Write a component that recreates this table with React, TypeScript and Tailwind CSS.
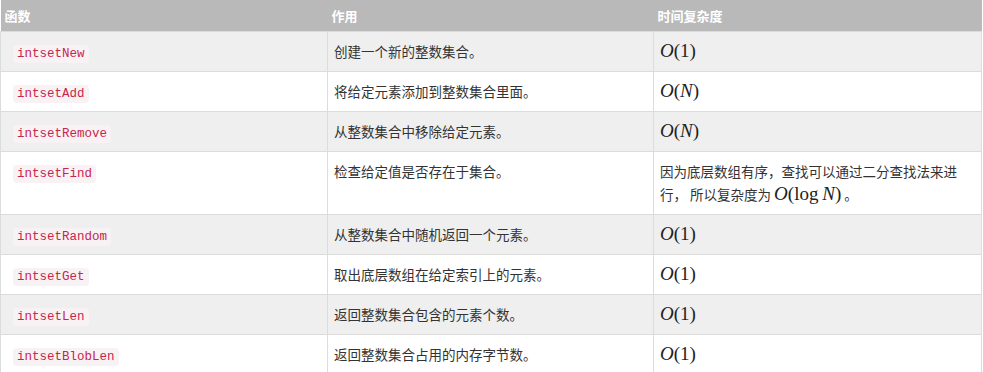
import React from 'react';

type Row = { fn: string; desc: string; cost: React.ReactNode };

// inline formula, KaTeX-ish look with a serif face
const O = ({ children }: { children: React.ReactNode }) => (
  <span className="font-['Liberation_Serif',serif] text-[19px] leading-[0] whitespace-nowrap text-[#222]">
    <i>O</i>
    <span>(</span>
    {children}
    <span>)</span>
  </span>
);

const rows: Row[] = [
  { fn: 'intsetNew', desc: '创建一个新的整数集合。', cost: <O>1</O> },
  { fn: 'intsetAdd', desc: '将给定元素添加到整数集合里面。', cost: <O><i>N</i></O> },
  { fn: 'intsetRemove', desc: '从整数集合中移除给定元素。', cost: <O><i>N</i></O> },
  {
    fn: 'intsetFind',
    desc: '检查给定值是否存在于集合。',
    cost: (
      <>
        因为底层数组有序，查找可以通过二分查找法来进
        <br />
        行， 所以复杂度为{' '}
        <O>
          log&thinsp;<i>N</i>
        </O>{' '}
        。
      </>
    ),
  },
  { fn: 'intsetRandom', desc: '从整数集合中随机返回一个元素。', cost: <O>1</O> },
  { fn: 'intsetGet', desc: '取出底层数组在给定索引上的元素。', cost: <O>1</O> },
  { fn: 'intsetLen', desc: '返回整数集合包含的元素个数。', cost: <O>1</O> },
  { fn: 'intsetBlobLen', desc: '返回整数集合占用的内存字节数。', cost: <O>1</O> },
];

export default function App() {
  return (
    <div className="w-[983px] h-[372px] bg-white overflow-hidden font-['Noto_Sans_CJK_SC','Noto_Sans',sans-serif] text-[13.5px] text-[#333]">
      <table className="w-[981px] border-collapse table-fixed">
        <colgroup>
          <col className="w-[327px]" />
          <col className="w-[326px]" />
          <col className="w-[328px]" />
        </colgroup>
        <thead>
          <tr className="bg-[#b9b9b9] h-[31px] text-white text-left text-[13px]">
            <th className="px-1 py-0 font-bold">函数</th>
            <th className="px-1 py-0 font-bold">作用</th>
            <th className="px-1 py-0 font-bold">时间复杂度</th>
          </tr>
        </thead>
        <tbody>
          {rows.map((r, i) => (
            <tr key={r.fn} className={i % 2 === 0 ? 'bg-[#efefef]' : 'bg-white'}>
              <td className="border border-[#dcdcdc] px-3 py-2 align-top leading-[23px]">
                <code className="font-['Liberation_Mono',monospace] text-[12.5px] leading-[0] text-[#c7254e] bg-[#f9f2f4] px-1 py-[2px] rounded-sm">
                  {r.fn}
                </code>
              </td>
              <td className="border border-[#dcdcdc] px-[6px] py-2 align-top leading-[23px]">{r.desc}</td>
              <td className="border border-[#dcdcdc] pl-[6px] pr-[2px] py-2 align-top leading-[23px] whitespace-nowrap">{r.cost}</td>
            </tr>
          ))}
        </tbody>
      </table>
    </div>
  );
}
